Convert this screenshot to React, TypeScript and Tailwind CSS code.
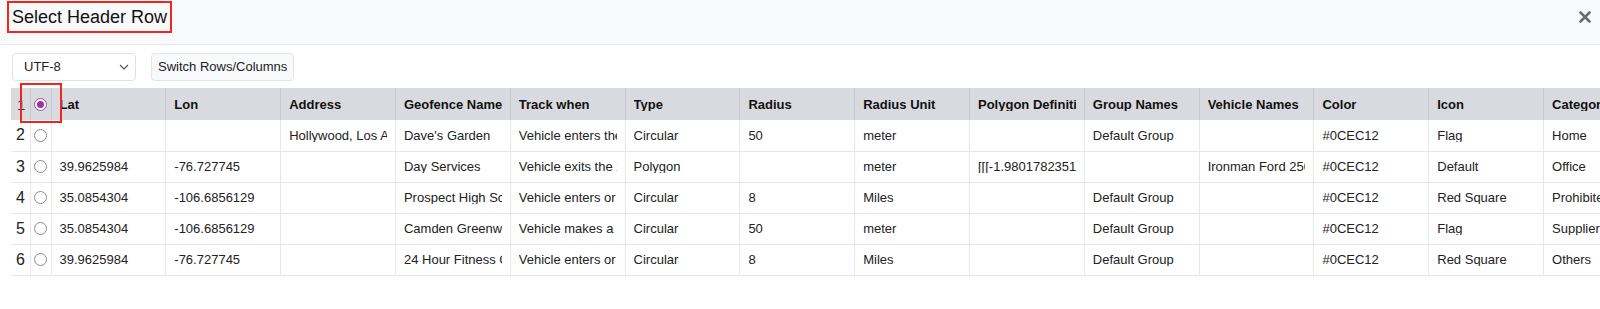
import React from 'react';

const columns = [
  'Lat', 'Lon', 'Address', 'Geofence Name', 'Track when', 'Type', 'Radius',
  'Radius Unit', 'Polygon Definition', 'Group Names', 'Vehicle Names', 'Color', 'Icon', 'Category',
];

const rows: string[][] = [
  ['', '', 'Hollywood, Los Angeles', "Dave's Garden", 'Vehicle enters the zone', 'Circular', '50', 'meter', '', 'Default Group', '', '#0CEC12', 'Flag', 'Home'],
  ['39.9625984', '-76.727745', '', 'Day Services', 'Vehicle exits the zone', 'Polygon', '', 'meter', '[[[-1.98017823519]]]', '', 'Ironman Ford 250', '#0CEC12', 'Default', 'Office'],
  ['35.0854304', '-106.6856129', '', 'Prospect High School', 'Vehicle enters or exits', 'Circular', '8', 'Miles', '', 'Default Group', '', '#0CEC12', 'Red Square', 'Prohibited'],
  ['35.0854304', '-106.6856129', '', 'Camden Greenway', 'Vehicle makes a stop', 'Circular', '50', 'meter', '', 'Default Group', '', '#0CEC12', 'Flag', 'Supplier'],
  ['39.9625984', '-76.727745', '', '24 Hour Fitness Gym', 'Vehicle enters or exits', 'Circular', '8', 'Miles', '', 'Default Group', '', '#0CEC12', 'Red Square', 'Others'],
];

const Radio: React.FC<{ checked?: boolean }> = ({ checked }) => (
  <span
    className={`flex h-[13px] w-[13px] items-center justify-center rounded-full border bg-white ${
      checked ? 'border-[#a24aa9]' : 'border-[#8d8d8d]'
    }`}
  >
    {checked && <span className="h-[7px] w-[7px] rounded-full bg-[#9a34a2]" />}
  </span>
);

const App: React.FC = () => {
  return (
    <div className="h-[309px] w-[1600px] overflow-hidden bg-white font-['Liberation_Sans',Arial,sans-serif] text-[#212529]">
      {/* modal header */}
      <div className="flex h-[45px] items-center justify-between border-b border-[#e7e9ec] bg-[#f8f9fa] pl-[7px] pr-[9px]">
        <span className="-mt-[11px] border-2 border-[#f0251b] px-[3px] py-[2px] text-[18px] leading-[24px] text-[#111]">
          Select Header Row
        </span>
        <svg width="12" height="12" viewBox="0 0 12 12" className="-mt-[10px]">
          <path d="M1.5 1.5 L10.5 10.5 M10.5 1.5 L1.5 10.5" stroke="#6c6c6c" strokeWidth="2.6" strokeLinecap="round" />
        </svg>
      </div>

      {/* controls */}
      <div className="flex gap-[15px] px-3 pt-2">
        <div className="flex h-[28px] w-[124px] items-center justify-between rounded-[4px] border border-[#dee2e6] bg-white pl-[11px] pr-[6px] text-[13px] text-[#222]">
          <span>UTF-8</span>
          <svg width="10" height="6" viewBox="0 0 10 6">
            <path d="M1 1 L5 5 L9 1" fill="none" stroke="#555" strokeWidth="1.2" />
          </svg>
        </div>
        <button className="h-[28px] rounded-[4px] border border-[#e3e5e8] bg-[#f8f9fa] px-[6px] text-[13px] text-[#222]">
          Switch Rows/Columns
        </button>
      </div>

      {/* table */}
      <div className="relative ml-[11px] mt-[7px]">
        <table className="w-[1648px] table-fixed border-collapse text-[13px] leading-none">
          <colgroup>
            <col className="w-[19px]" />
            <col className="w-[21px]" />
            {columns.map((c) => (
              <col key={c} className="w-[114.8px]" />
            ))}
          </colgroup>
          <thead>
            <tr className="h-[32px] bg-[#d9dadf]">
              <th className="border-r border-[#c9cacf] pl-[6px] text-left text-[15px] font-normal text-[#333]">1</th>
              <th className="border-r border-[#c9cacf]">
                <div className="flex justify-center">
                  <Radio checked />
                </div>
              </th>
              {columns.map((c) => (
                <th key={c} className="border-r border-[#c9cacf] px-2 text-left font-bold text-[#111]">
                  <div className="overflow-hidden whitespace-nowrap">{c}</div>
                </th>
              ))}
            </tr>
          </thead>
          <tbody>
            {rows.map((r, i) => (
              <tr key={i} className="h-[31px] border-b border-[#e6e7ea]">
                <td className="border-r border-[#e6e7ea] pl-[5px] text-[16px] text-[#222]">{i + 2}</td>
                <td className="border-r border-[#e6e7ea]">
                  <div className="flex justify-center">
                    <Radio />
                  </div>
                </td>
                {r.map((v, j) => (
                  <td key={j} className="border-r border-[#e6e7ea] px-2 text-[#222]">
                    <div className="overflow-hidden whitespace-nowrap">{v}</div>
                  </td>
                ))}
              </tr>
            ))}
          </tbody>
        </table>
        {/* highlight around the selected radio */}
        <div className="pointer-events-none absolute left-[9px] top-[-5px] h-[40px] w-[42px] border-2 border-[#f0251b]" />
      </div>
    </div>
  );
};

export default App;
